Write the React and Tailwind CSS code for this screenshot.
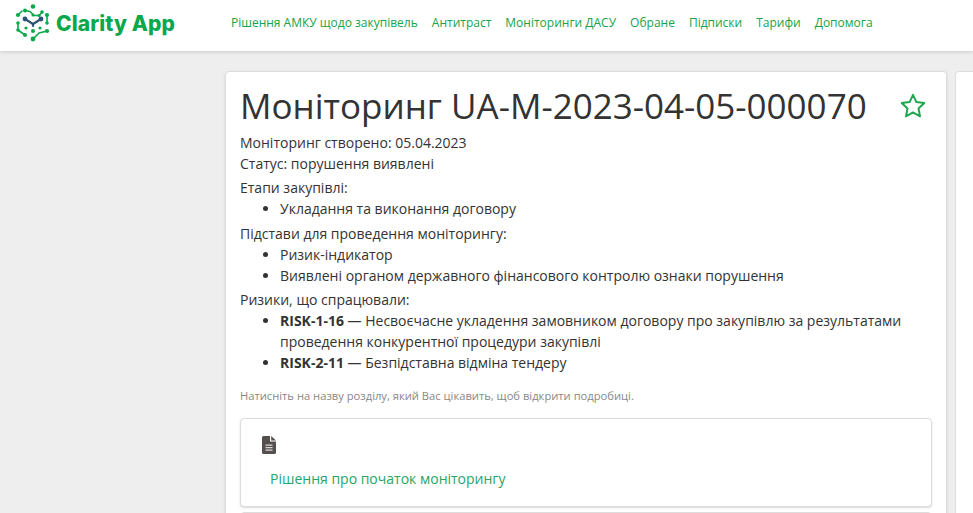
const navLinks = ['Рішення АМКУ щодо закупівель', 'Антитраст', 'Моніторинги ДАСУ', 'Обране', 'Підписки', 'Тарифи', 'Допомога'];

const Logo = () => (
  <svg width="36" height="38" viewBox="0 0 36 38" fill="none">
    <g stroke="#0aa84a" strokeWidth="1.6" strokeLinecap="round" strokeLinejoin="round">
      <path d="M10 6.5l5 1 4 4h5l3-3" />
      <path d="M3 11l4-4" />
      <path d="M32 11v8" />
      <path d="M3 19v7" />
      <path d="M18 35l6-6 8-2" />
      <path d="M3 26l7 5" />
    </g>
    <g stroke="#2c5573" strokeWidth="2.2" strokeLinecap="round" strokeLinejoin="round">
      <path d="M10 15l8 5 8-5" />
      <path d="M18 20v2" />
    </g>
    <g fill="#0aa84a">
      <circle cx="18" cy="2.5" r="2.3" />
      <circle cx="10" cy="6.5" r="2" />
      <circle cx="24" cy="11.5" r="1.6" />
      <circle cx="27" cy="8" r="1.8" />
      <circle cx="32" cy="11" r="2.1" />
      <circle cx="3" cy="11" r="2.1" />
      <circle cx="3" cy="19" r="1.8" />
      <circle cx="32" cy="19" r="1.8" />
      <circle cx="3" cy="26" r="1.8" />
      <circle cx="10" cy="31" r="2" />
      <circle cx="18" cy="27" r="2" />
      <circle cx="11" cy="24" r="1.6" />
      <circle cx="25" cy="24" r="1.6" />
      <circle cx="32" cy="27" r="2.1" />
      <circle cx="18" cy="35" r="2.4" />
      <circle cx="18" cy="11" r="1.6" />
    </g>
    <g fill="#2c5573">
      <circle cx="10" cy="15" r="2.4" />
      <circle cx="26" cy="15" r="2.4" />
    </g>
  </svg>
);

const Star = () => (
  <svg width="26" height="25" viewBox="0 0 26 25" fill="none">
    <path d="M13 1.8l3.4 7.3 7.9 1-5.8 5.4 1.5 7.8-7-3.9-7 3.9 1.5-7.8L1.7 10.1l7.9-1z" stroke="#1ea84f" strokeWidth="2" strokeLinejoin="round" />
  </svg>
);

const FileIcon = () => (
  <svg width="14" height="18" viewBox="0 0 14 18">
    <path d="M0 1.5A1.5 1.5 0 0 1 1.5 0H8v5.5h6v11a1.5 1.5 0 0 1-1.5 1.5h-11A1.5 1.5 0 0 1 0 16.5z" fill="#55504e" />
    <path d="M9.2 0L14 4.4H9.2z" fill="#55504e" />
    <path d="M3.5 8.5h7v1.2h-7zM3.5 11h7v1.2h-7zM3.5 13.5h7v1.2h-7z" fill="#d8d6d5" />
  </svg>
);

export default function App() {
  return (
    <div className="h-screen overflow-hidden bg-[#eeeeee] font-['Open_Sans',sans-serif] text-[14px] leading-[21px] text-[#333333]">
      <nav className="flex h-[51px] items-center bg-white pb-[5px] pl-[15px] shadow-[0_1px_4px_rgba(0,0,0,0.15)]">
        <div className="flex w-[216px] items-center gap-[5px]">
          <Logo />
          <span className="font-['Inter',sans-serif] text-[21px] font-extrabold tracking-[0.1px] text-[#0aa84a]">Clarity App</span>
        </div>
        <div className="flex gap-[14px] pb-[1px] text-[12px] text-[#16a34a]">
          {navLinks.map((link) => (
            <a key={link}>{link}</a>
          ))}
        </div>
      </nav>

      <main className="flex gap-[8px] pl-[225px] pt-[20px]">
        <div className="w-[722px] shrink-0 rounded border border-[#dddddd] bg-white px-[14px] pt-[9px] shadow-sm">
          <div className="flex items-start justify-between pr-[6px]">
            <h1 className="text-[35px] leading-[50px]">Моніторинг UA-M-2023-04-05-000070</h1>
            <div className="pt-[12px]">
              <Star />
            </div>
          </div>
          <div className="mt-[1px]">Моніторинг створено: 05.04.2023</div>
          <div>Статус: порушення виявлені</div>
          <div className="mt-[3px]">
            <div>Етапи закупівлі:</div>
            <ul className="list-disc pl-10">
              <li>Укладання та виконання договору</li>
            </ul>
          </div>
          <div className="mt-[4px]">
            <div>Підстави для проведення моніторингу:</div>
            <ul className="list-disc pl-10">
              <li>Ризик-індикатор</li>
              <li>Виявлені органом державного фінансового контролю ознаки порушення</li>
            </ul>
          </div>
          <div className="mt-[3px]">
            <div>Ризики, що спрацювали:</div>
            <ul className="list-disc pl-10">
              <li><b>RISK-1-16</b> — Несвоєчасне укладення замовником договору про закупівлю за результатами проведення конкурентної процедури закупівлі</li>
              <li><b>RISK-2-11</b> — Безпідставна відміна тендеру</li>
            </ul>
          </div>
          <p className="mt-[14px] text-[11.2px] leading-[17px] text-[#888888]">Натисніть на назву розділу, який Вас цікавить, щоб відкрити подробиці.</p>
          <div className="mt-[14px] h-[89px] rounded border border-[#dddddd] bg-white pl-[21px] pt-[17px] shadow-[0_1px_2px_rgba(0,0,0,0.15)]">
            <FileIcon />
            <a className="mt-[14px] block pl-[8px] text-[#27a567]">Рішення про початок моніторингу</a>
          </div>
          <div className="mt-[5px] h-[89px] rounded border border-[#dddddd] bg-white" />
        </div>
        <div className="h-[600px] flex-1 rounded-l border border-r-0 border-[#dddddd] bg-white" />
      </main>
    </div>
  );
}
